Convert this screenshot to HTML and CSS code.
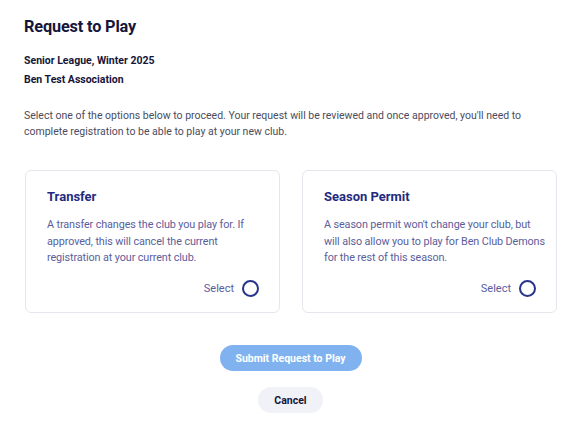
FILE: index.html
```html
<!DOCTYPE html>
<html lang="en">
<head>
<meta charset="utf-8">
<title>Request to Play</title>
<link rel="stylesheet" href="styles.css">
</head>
<body>
<main class="page">
  <h1 class="title">Request to Play</h1>
  <p class="meta">Senior League, Winter 2025</p>
  <p class="meta meta-2">Ben Test Association</p>
  <p class="intro">Select one of the options below to proceed. Your request will be reviewed and once approved, you'll need to complete registration to be able to play at your new club.</p>
  <div class="options">
    <div class="card">
      <h2 class="card-title">Transfer</h2>
      <p class="card-text">A transfer changes the club you play for. If approved, this will cancel the current registration at your current club.</p>
      <div class="select"><span>Select</span><span class="radio"></span></div>
    </div>
    <div class="card">
      <h2 class="card-title">Season Permit</h2>
      <p class="card-text">A season permit won't change your club, but will&nbsp;also allow you to play for Ben Club Demons for the rest of this season.</p>
      <div class="select"><span>Select</span><span class="radio"></span></div>
    </div>
  </div>
  <div class="actions">
    <button class="btn btn-primary" disabled>Submit Request to Play</button>
    <button class="btn btn-cancel">Cancel</button>
  </div>
</main>
</body>
</html>
```
FILE: styles.css
```css
* { box-sizing: border-box; }
html, body { margin: 0; padding: 0; background: #fff; }
body { font-family: Roboto, "Liberation Sans", sans-serif; }
.page { padding: 16px 26px 0 24px; }
.title { margin: 0; font-size: 16.3px; font-weight: 700; color: #15163a; line-height: 22px; letter-spacing: -0.15px; }
.meta { margin: 16px 0 0; font-size: 10.5px; font-weight: 700; color: #15163a; line-height: 14px; }
.meta-2 { margin-top: 5px; }
.intro { margin: 21px 0 0; font-size: 10.5px; line-height: 15.5px; color: #4b4c5e; }
.options { display: grid; grid-template-columns: 1fr 1fr; gap: 22px; margin-top: 31px; margin-left: 1px; }
.card { border: 1px solid #e6e7ee; border-radius: 6px; height: 143px; padding: 17px 6px 0 21px; display: flex; flex-direction: column; }
.card-title { margin: 0; font-size: 13px; font-weight: 700; color: #1f2b7e; line-height: 18px; }
.card-text { margin: 11px 0 0; font-size: 10.8px; letter-spacing: -0.1px; line-height: 16.5px; color: #5a5e9c; }
.select { margin-top: auto; margin-bottom: 15px; padding-right: 14px; display: flex; justify-content: flex-end; align-items: center; gap: 8px; font-size: 11px; color: #5a5e9c; }
.radio { width: 17px; height: 17px; border: 2px solid #28348a; border-radius: 50%; }
.actions { display: flex; flex-direction: column; align-items: center; margin-top: 32px; gap: 16px; }
.btn { font-family: inherit; border: none; border-radius: 14px; height: 26px; font-size: 10.5px; font-weight: 700; padding: 0; white-space: nowrap; }
.btn-primary { background: #80b2f0; color: #fff; width: 142px; }
.btn-cancel { background: #f0f2f7; color: #15163a; width: 65px; }
```
